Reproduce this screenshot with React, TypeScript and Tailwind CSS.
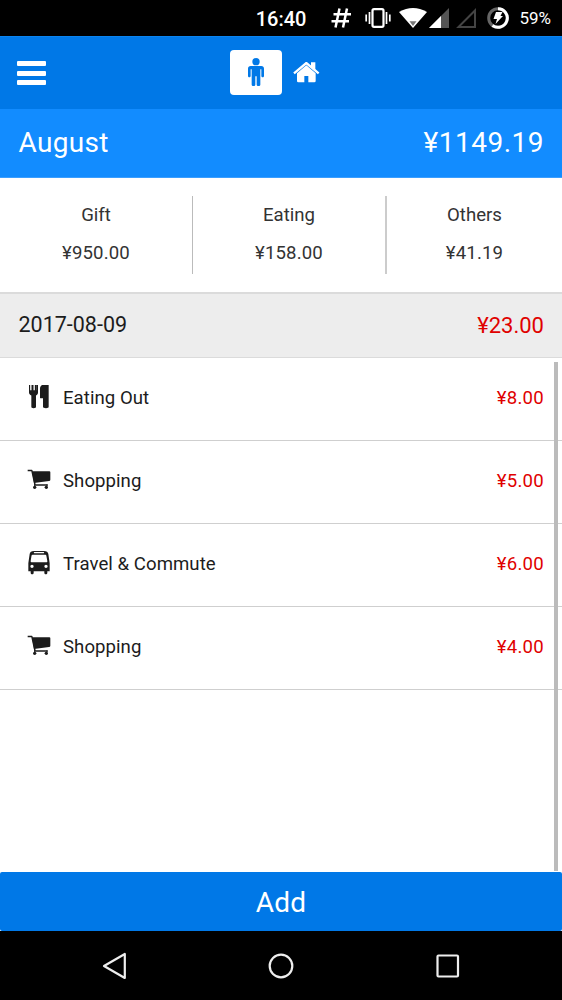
import type { ReactNode } from "react";

function CutleryIcon() {
  return (
    <svg className="h-6 w-6" viewBox="51 43.500 72 72" fill="currentColor">
      <path d="M57 42h3.500v17h4V42h6v17h4V42h6v17h.5V42h3v24c0 4-2 7-6 9v34c0 3-2 4-7 4s-7-1-7-4V75c-4-2-7-5-7-9zM102 42h14v67c0 3-3 4-8 4s-9-1-9-4V83h-7c-2 0-2-1-2-3V55c0-8 5-13 12-13z" />
    </svg>
  );
}

function CartIcon() {
  return (
    <svg className="h-6 w-6" viewBox="51 294 72 72">
      <path d="M53 301.500h12.500l9.500 43.500h38" fill="none" stroke="currentColor" strokeWidth="4" strokeLinejoin="round" />
      <path d="M66 304h52q3 0 3 3v22q0 4-4 4l-45 6z" fill="currentColor" />
      <path d="M74 336v13M111 343v6" stroke="currentColor" strokeWidth="3" />
      <circle cx="74" cy="352" r="5" fill="currentColor" />
      <circle cx="109" cy="352" r="5" fill="currentColor" />
    </svg>
  );
}

function BusIcon() {
  return (
    <svg className="h-6 w-6" viewBox="50 47 72 72" fill="currentColor">
      <path
        fillRule="evenodd"
        d="M71 47h30c8 0 12 3 13 9l4 28v24h-7v4c0 6-9 6-9 0v-4H70v4c0 6-9 6-9 0v-4h-7V84l4-28c1-6 5-9 13-9zm1 3c-2 0-2 4 0 4h28c2 0 2-4 0-4zm-5 8c-2 0-3 1-3.500 3L61 77c0 3 1 4 3 4h44c2 0 3-1 3-4l-3-16c0-2-1-3-3-3zM65 88a5 5 0 1 0 0 10a5 5 0 0 0 0-10zm42 0a5 5 0 1 0 0 10a5 5 0 0 0 0-10z"
      />
    </svg>
  );
}

function StatusBar() {
  return (
    <div className="flex h-9 items-center justify-end bg-black pr-[11px] text-white">
      <span className="mt-[2px] mr-[25px] text-[20px] leading-6 font-medium">16:40</span>
      <svg className="mr-[14px] h-5 w-5" viewBox="0 0 20 20" fill="none" stroke="white" strokeWidth="2.500">
        <path d="M8.500.500 4.500 19.500M16 .500l-4 19M2.500 6.300h17.500M.500 13.300H18" />
      </svg>
      <svg className="mr-[8px] h-5 w-[26px]" viewBox="0 0 26 20" fill="none" stroke="white">
        <rect x="7.500" y="1.200" width="11" height="17.600" rx="1.500" strokeWidth="2.200" />
        <path d="M4.500 4v12M21.500 4v12M1.200 6.500v7M24.800 6.500v7" strokeWidth="1.700" />
      </svg>
      <svg className="mr-[2px] h-5 w-7" viewBox="0 0 28 20">
        <path d="M0 4Q14-4 28 4L14 20z" fill="white" />
        <path d="M10.500 13.300h7L14 18z" fill="#777" />
      </svg>
      <svg className="mr-[7px] h-5 w-5" viewBox="0 0 20 20">
        <path d="M20 0v20H0z" fill="#555" />
        <path d="M12 8v12H0z" fill="white" />
      </svg>
      <svg className="mr-[11px] h-5 w-5" viewBox="0 0 20 20">
        <path d="M19 2.500V19H2.500z" fill="none" stroke="#444" strokeWidth="2" />
      </svg>
      <svg className="mr-[10px] h-[22px] w-[22px]" viewBox="0 0 22 22" fill="none">
        <circle cx="11" cy="11" r="9.300" stroke="#666" strokeWidth="3" />
        <path d="M11 1.700A9.300 9.300 0 1 1 5.500 18.500" stroke="white" strokeWidth="3" />
        <path d="m9 5 6.500 0-2 4H16l-7.500 8 1.500-5H6.500z" fill="white" />
      </svg>
      <span className="text-[17px] leading-5">59%</span>
    </div>
  );
}

function Header() {
  return (
    <header className="flex h-[73px] items-center border-t border-[#0a84f0] bg-[#0078e7] text-white">
      <button className="ml-[17px] flex w-[29px] flex-col gap-[4.500px]" aria-label="Menu">
        <span className="h-[5px] w-full rounded-[1px] bg-white" />
        <span className="h-[5px] w-full rounded-[1px] bg-white" />
        <span className="h-[5px] w-full rounded-[1px] bg-white" />
      </button>
      <button className="mt-[-2px] ml-[184px] flex h-[45px] w-[52px] items-center justify-center rounded-[4px] bg-white text-[#0078e7]" aria-label="Personal">
        <svg className="h-7 w-4" viewBox="83 54 48 84" fill="currentColor">
          <circle cx="107" cy="65" r="11" />
          <path d="M91 78h32c5 0 8 3 8 8v22c0 5-8 5-8 0V88h-3v46c0 6-11 6-11 0v-25h-4v25c0 6-11 6-11 0V88h-3v20c0 5-8 5-8 0V86c0-5 3-8 8-8z" />
        </svg>
      </button>
      <button className="ml-[11px]" aria-label="Home">
        <svg className="mt-[-2px] h-[21px] w-[27px]" viewBox="219 64 81 63">
          <path d="m222 98 37-31 37 31" fill="none" stroke="white" strokeWidth="7" />
          <path d="M273 65h13v25l-13-10zM259 74l28 23.500v23.500q0 4-4 4h-18v-19h-12v19h-18q-4 0-4-4V97.500z" fill="white" />
        </svg>
      </button>
    </header>
  );
}

const totals = [
  { label: "Gift", amount: "¥950.00", width: "w-[193px] border-r" },
  { label: "Eating", amount: "¥158.00", width: "w-[194px] border-r-2 border-[#ccc]" },
  { label: "Others", amount: "¥41.19", width: "flex-1" },
];

const entries: { name: string; amount: string; icon: ReactNode }[] = [
  { name: "Eating Out", amount: "¥8.00", icon: <CutleryIcon /> },
  { name: "Shopping", amount: "¥5.00", icon: <CartIcon /> },
  { name: "Travel & Commute", amount: "¥6.00", icon: <BusIcon /> },
  { name: "Shopping", amount: "¥4.00", icon: <CartIcon /> },
];

export default function App() {
  return (
    <div className="flex h-[1000px] w-[562px] flex-col overflow-hidden bg-white font-[Roboto,sans-serif] text-[#1c1c1c]">
      <StatusBar />
      <Header />
      <section className="flex h-[69px] items-center justify-between border-b border-[#3b9eff] bg-[#128cff] pr-[18px] pl-[18.500px] text-[28px] tracking-[0.5px] text-white">
        <span className="tracking-[0.300px]">August</span>
        <span>¥1149.19</span>
      </section>
      <section className="flex h-[114px] pt-[18px] text-[18.600px] text-[#333]">
        {totals.map((t) => (
          <div key={t.label} className={`flex h-[78px] flex-col items-center gap-[14px] border-[#bbb] pt-[7px] leading-6 ${t.width}`}>
            <span>{t.label}</span>
            <span className="tracking-[0.15px]">{t.amount}</span>
          </div>
        ))}
      </section>
      <section className="flex h-[66px] items-center justify-between border-t-2 border-b border-[#dbdbdb] bg-[#ededed] pr-[18px] pl-[18.500px] text-[22px]">
        <span className="text-[21.500px]">2017-08-09</span>
        <span className="text-[#e00000]">¥23.00</span>
      </section>
      <main className="relative min-h-0 flex-1">
        <ul>
          {entries.map((e, i) => (
            <li key={i} className="flex h-[83px] items-center border-b border-[#cfcfcf] pr-[18px] pl-[27px] text-[18.600px] leading-7">
              <span className="mt-[-5px] mr-3 leading-6">{e.icon}</span>
              <span className="mt-[-3px] tracking-[0.05px]">{e.name}</span>
              <span className="mt-[-3px] ml-auto tracking-[0.25px] text-[#e00000]">{e.amount}</span>
            </li>
          ))}
        </ul>
        <div className="absolute top-1 right-[4px] bottom-px w-1 bg-[#bbb]" />
      </main>
      <button className="h-[59px] rounded-[2px] bg-[#0078e7] pt-[3px] text-[28px] tracking-[0.3px] text-white">Add</button>
      <nav className="flex h-[69px] items-center bg-black text-[#eee]">
        <svg className="ml-[102px] h-7 w-6" viewBox="0 0 24 28" fill="none" stroke="currentColor" strokeWidth="2.200" strokeLinejoin="round">
          <path d="M22.800 2v24L2 14z" />
        </svg>
        <svg className="ml-[142px] h-[26px] w-[26px]" viewBox="0 0 26 26" fill="none" stroke="currentColor" strokeWidth="2.200">
          <circle cx="13" cy="13" r="11.300" />
        </svg>
        <svg className="ml-[142px] h-6 w-6" viewBox="0 0 24 24" fill="none" stroke="currentColor" strokeWidth="2.200">
          <rect x="1.500" y="1.500" width="20.500" height="21" rx="1" />
        </svg>
      </nav>
    </div>
  );
}
